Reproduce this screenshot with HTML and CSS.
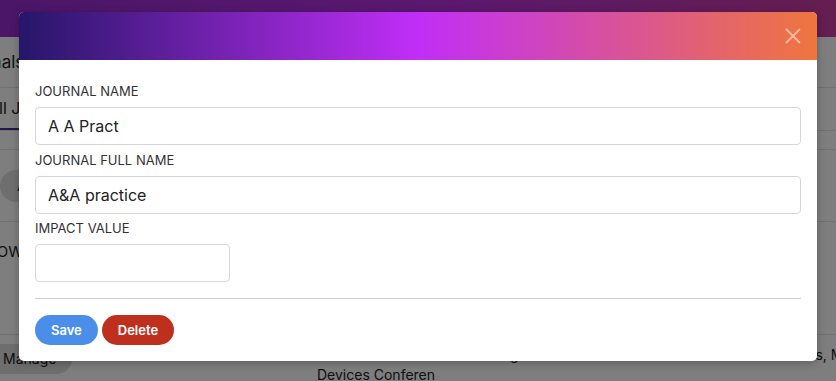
FILE: index.html
```html
<!DOCTYPE html>
<html lang="en">
<head>
<meta charset="utf-8">
<title>Edit Journal</title>
<link rel="stylesheet" href="styles.css">
</head>
<body>
<div class="page">
  <header class="topbar"></header>
  <div class="title-row"><h1 class="title">Journals</h1></div>
  <div class="tabs"><span class="tab active">All Journals</span><span class="tab">Archived</span></div>
  <div class="spacer-row"></div>
  <div class="filter-row"><span class="chip">All</span><span class="chip">Active</span></div>
  <div class="show-row"><span class="show">SHOW</span></div>
  <div class="table-row">
    <div class="cell cell-manage"><span class="manage">Manage</span></div>
    <div class="cell cell-name">IEEE Electron Devices Meeting<br>Devices Conferen</div>
    <div class="cell cell-tail">Devices, M</div>
  </div>
</div>

<div class="overlay"></div>

<div class="modal">
  <div class="modal-header">
    <button class="close" aria-label="Close">
      <svg width="16" height="16" viewBox="0 0 16 16"><path d="M1 1L15 15M15 1L1 15" stroke="currentColor" stroke-width="1.8" fill="none"/></svg>
    </button>
  </div>
  <div class="modal-body">
    <div class="group">
      <label class="label">Journal Name</label>
      <input class="input" type="text" value="A A Pract">
    </div>
    <div class="group">
      <label class="label">Journal Full Name</label>
      <input class="input" type="text" value="A&amp;A practice">
    </div>
    <div class="group last">
      <label class="label">Impact Value</label>
      <input class="input short" type="text" value="">
    </div>
    <hr class="divider">
    <div class="actions">
      <button class="btn btn-save">Save</button>
      <button class="btn btn-delete">Delete</button>
    </div>
  </div>
</div>
</body>
</html>
```

FILE: styles.css
```css
* { box-sizing: border-box; }
html, body { margin: 0; padding: 0; }
body {
  width: 836px;
  height: 381px;
  overflow: hidden;
  font-family: Inter, "Liberation Sans", sans-serif;
  background: #fafcfb;
  color: #222;
  position: relative;
}

/* background page */
.page { width: 836px; height: 381px; overflow: hidden; }
.topbar {
  height: 37px;
  background: linear-gradient(90deg, #962cd0 0%, #b430e0 50%, #ca3ca0 100%);
}
.title-row {
  height: 51px;
  border-bottom: 1px solid #dfe3e1;
  display: flex;
  align-items: center;
}
.title {
  margin: 0 0 0 -45px;
  font-size: 17px;
  font-weight: 400;
  color: #222;
}
.tabs {
  height: 43px;
  border-bottom: 1px solid #dfe3e1;
  display: flex;
  align-items: stretch;
}
.tab {
  display: flex;
  align-items: center;
  padding: 0 16px;
  font-size: 16px;
  color: #222;
}
.tab.active {
  margin-left: -28px;
  border-bottom: 2px solid #4b2aa0;
}
.spacer-row {
  height: 19px;
  border-bottom: 1px solid #dfe3e1;
}
.filter-row {
  height: 72px;
  border-bottom: 1px solid #dfe3e1;
  display: flex;
  align-items: center;
  gap: 8px;
}
.chip {
  height: 32px;
  border-radius: 16px;
  background: #dcdcdc;
  padding: 0 16px 0 17px;
  display: flex;
  align-items: center;
  font-size: 14px;
}
.show-row {
  height: 113px;
  border-bottom: 1px solid #dfe3e1;
  padding-top: 20px;
}
.show {
  display: block;
  margin-left: -24px;
  font-size: 15px;
  line-height: 20px;
}
.table-row {
  display: flex;
  padding-top: 9px;
  font-size: 14px;
  line-height: 20px;
}
.cell { flex-shrink: 0; }
.cell-manage { width: 317px; }
.manage {
  display: inline-flex;
  align-items: center;
  height: 30px;
  border-radius: 15px;
  background: #dcdcdc;
  margin-left: -13px;
  padding: 0 16px;
  font-size: 14px;
}
.cell-name { width: 453px; padding-top: 1px; }
.cell-tail { white-space: nowrap; padding-top: 1px; }

.overlay {
  position: absolute;
  inset: 0;
  background: rgba(0, 0, 0, 0.5);
}

/* modal */
.modal {
  position: absolute;
  left: 19px;
  top: 12px;
  width: 798px;
  background: #fff;
  border-radius: 5px;
  overflow: hidden;
  box-shadow: 0 2px 8px rgba(0, 0, 0, 0.25);
}
.modal-header {
  height: 48px;
  background: linear-gradient(90deg, #261668 0%, #c12ef7 50%, #ef763e 100%);
  display: flex;
  align-items: center;
  justify-content: flex-end;
  padding-right: 16px;
}
.close {
  border: 0;
  background: none;
  padding: 0;
  width: 16px;
  height: 16px;
  color: rgba(255, 255, 255, 0.5);
  display: flex;
}
.modal-body {
  padding: 21px 16px 16px;
}
.group { margin-bottom: 4.5px; }
.group.last { margin-bottom: 0; }
.label {
  display: block;
  font-size: 13px;
  line-height: 20px;
  margin-bottom: 6px;
  color: #333;
  text-transform: uppercase;
}
.input {
  display: block;
  width: 100%;
  height: 38px;
  border: 1px solid #d3d6dc;
  border-radius: 4px;
  padding: 0 12px;
  font-family: Inter, "Liberation Sans", sans-serif;
  font-size: 16px;
  color: #222;
  background: #fff;
}
.input.short { width: 195px; }
.divider {
  margin: 16px 0;
  border: 0;
  border-top: 1px solid #cfcfcf;
  height: 0;
}
.actions {
  display: flex;
  gap: 4px;
}
.btn {
  height: 30px;
  border: 0;
  border-radius: 15px;
  padding: 0 16px;
  font-family: Inter, "Liberation Sans", sans-serif;
  font-size: 13px;
  font-weight: 600;
  color: #fff;
}
.btn-save { background: #4a8ee9; }
.btn-delete { background: #bf2f1e; }
```
